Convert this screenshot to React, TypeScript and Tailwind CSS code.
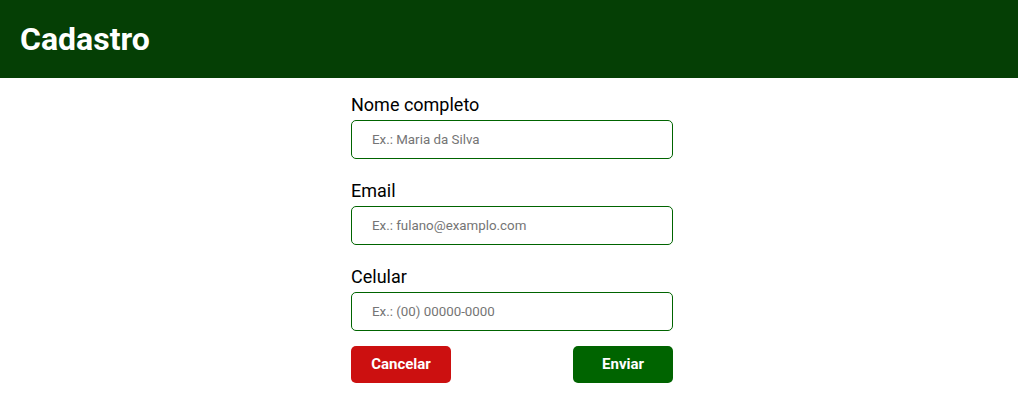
const fields = [
  { label: "Nome completo", placeholder: "Ex.: Maria da Silva", type: "text" },
  { label: "Email", placeholder: "Ex.: fulano@examplo.com", type: "email" },
  { label: "Celular", placeholder: "Ex.: (00) 00000-0000", type: "tel" },
];

export default function App() {
  return (
    <div className="min-h-screen bg-white font-['Roboto',sans-serif]">
      <header className="h-[78px] bg-[#053f05] flex items-center px-5">
        <h1 className="text-white font-bold text-[32px] leading-none">Cadastro</h1>
      </header>

      <form className="w-[322px] ml-[calc(50%-158px)] pt-4">
        {fields.map((field, index) => (
          <div key={index} className={`${index === fields.length - 1 ? "mb-[15px]" : "mb-[21px]"} flex flex-col`}>
            <label className="text-[18px] leading-[21px] text-black mb-[5px]">{field.label}</label>
            <input
              type={field.type}
              placeholder={field.placeholder}
              className="h-[39px] border border-[#006400] rounded-[5px] px-5 text-[13.33px] text-black placeholder:text-[#757575] outline-none"
            />
          </div>
        ))}

        <div className="flex justify-between">
          <button type="button" className="w-[100px] h-[37px] rounded-[5px] bg-[#cc1010] text-white font-bold text-[15px]">
            Cancelar
          </button>
          <button type="submit" className="w-[100px] h-[37px] rounded-[5px] bg-[#006400] text-white font-bold text-[15px]">
            Enviar
          </button>
        </div>
      </form>
    </div>
  );
}
